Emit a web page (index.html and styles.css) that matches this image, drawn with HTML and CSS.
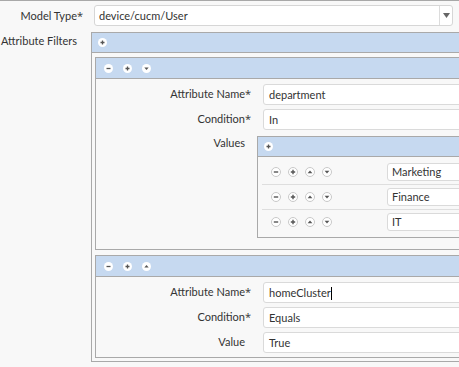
FILE: index.html
```html
<!DOCTYPE html>
<html lang="en">
<head>
    <meta charset="UTF-8">
    <meta name="viewport" content="width=device-width, initial-scale=1.0">
    <title>Data Filter</title>
    <link rel="stylesheet" href="styles.css">
</head>
<body>
    <div class="form">
        <div class="form-row">
            <label class="lbl">Model Type<span class="req">*</span></label>
            <div class="field">
                <div class="select">
                    <span class="select-value">device/cucm/User</span>
                    <span class="select-arrow">
                        <svg width="7" height="5" viewBox="0 0 7 5"><path d="M0 0h7l-3.5 5z" fill="#666"/></svg>
                    </span>
                </div>
            </div>
        </div>

        <div class="form-row">
            <label class="lbl lbl-top">Attribute Filters</label>
            <div class="field">
                <div class="panel outer">
                    <div class="panel-head">
                        <svg class="hbtn" viewBox="0 0 9 9"><circle cx="4.5" cy="4.5" r="4.5" fill="#fff"/><path d="M2.5 4.5h4M4.5 2.5v4" stroke="#555" stroke-width="1.3"/></svg>
                    </div>
                    <div class="outer-body">
                        <!-- filter 1 -->
                        <div class="panel item">
                            <div class="panel-head item-head">
                                <svg class="hbtn" viewBox="0 0 9 9"><circle cx="4.5" cy="4.5" r="4.5" fill="#fff"/><path d="M2.5 4.5h4" stroke="#555" stroke-width="1.3"/></svg>
                                <svg class="hbtn" viewBox="0 0 9 9"><circle cx="4.5" cy="4.5" r="4.5" fill="#fff"/><path d="M2.5 4.5h4M4.5 2.5v4" stroke="#555" stroke-width="1.3"/></svg>
                                <svg class="hbtn" viewBox="0 0 9 9"><circle cx="4.5" cy="4.5" r="4.5" fill="#fff"/><path d="M2.3 3.5h4.4l-2.2 2.6z" fill="#555"/></svg>
                            </div>
                            <div class="item-body">
                                <div class="item-row">
                                    <label class="ilbl">Attribute Name<span class="req">*</span></label>
                                    <div class="input">department</div>
                                </div>
                                <div class="item-row">
                                    <label class="ilbl">Condition<span class="req">*</span></label>
                                    <div class="input">In</div>
                                </div>
                                <div class="item-row values-row">
                                    <label class="ilbl ilbl-top">Values</label>
                                    <div class="panel values">
                                        <div class="panel-head values-head">
                                            <svg class="hbtn" viewBox="0 0 9 9"><circle cx="4.5" cy="4.5" r="4.5" fill="#fff"/><path d="M2.5 4.5h4M4.5 2.5v4" stroke="#555" stroke-width="1.3"/></svg>
                                        </div>
                                        <div class="values-body">
                                            <div class="value-row">
                                                <div class="value-btns">
                                                    <svg class="rbtn" viewBox="0 0 10 10"><circle cx="5" cy="5" r="4.5" fill="#fff" stroke="#c8c8c8"/><path d="M2.8 5h4.4" stroke="#555" stroke-width="1.4"/></svg>
                                                    <svg class="rbtn" viewBox="0 0 10 10"><circle cx="5" cy="5" r="4.5" fill="#fff" stroke="#c8c8c8"/><path d="M2.8 5h4.4M5 2.8v4.4" stroke="#555" stroke-width="1.4"/></svg>
                                                    <svg class="rbtn" viewBox="0 0 10 10"><circle cx="5" cy="5" r="4.5" fill="#fff" stroke="#c8c8c8"/><path d="M2.6 6.3h4.8l-2.4-2.9z" fill="#555"/></svg>
                                                    <svg class="rbtn" viewBox="0 0 10 10"><circle cx="5" cy="5" r="4.5" fill="#fff" stroke="#c8c8c8"/><path d="M2.6 3.7h4.8l-2.4 2.9z" fill="#555"/></svg>
                                                </div>
                                                <div class="input small">Marketing</div>
                                            </div>
                                            <div class="value-row">
                                                <div class="value-btns">
                                                    <svg class="rbtn" viewBox="0 0 10 10"><circle cx="5" cy="5" r="4.5" fill="#fff" stroke="#c8c8c8"/><path d="M2.8 5h4.4" stroke="#555" stroke-width="1.4"/></svg>
                                                    <svg class="rbtn" viewBox="0 0 10 10"><circle cx="5" cy="5" r="4.5" fill="#fff" stroke="#c8c8c8"/><path d="M2.8 5h4.4M5 2.8v4.4" stroke="#555" stroke-width="1.4"/></svg>
                                                    <svg class="rbtn" viewBox="0 0 10 10"><circle cx="5" cy="5" r="4.5" fill="#fff" stroke="#c8c8c8"/><path d="M2.6 6.3h4.8l-2.4-2.9z" fill="#555"/></svg>
                                                    <svg class="rbtn" viewBox="0 0 10 10"><circle cx="5" cy="5" r="4.5" fill="#fff" stroke="#c8c8c8"/><path d="M2.6 3.7h4.8l-2.4 2.9z" fill="#555"/></svg>
                                                </div>
                                                <div class="input small">Finance</div>
                                            </div>
                                            <div class="value-row">
                                                <div class="value-btns">
                                                    <svg class="rbtn" viewBox="0 0 10 10"><circle cx="5" cy="5" r="4.5" fill="#fff" stroke="#c8c8c8"/><path d="M2.8 5h4.4" stroke="#555" stroke-width="1.4"/></svg>
                                                    <svg class="rbtn" viewBox="0 0 10 10"><circle cx="5" cy="5" r="4.5" fill="#fff" stroke="#c8c8c8"/><path d="M2.8 5h4.4M5 2.8v4.4" stroke="#555" stroke-width="1.4"/></svg>
                                                    <svg class="rbtn" viewBox="0 0 10 10"><circle cx="5" cy="5" r="4.5" fill="#fff" stroke="#c8c8c8"/><path d="M2.6 6.3h4.8l-2.4-2.9z" fill="#555"/></svg>
                                                    <svg class="rbtn" viewBox="0 0 10 10"><circle cx="5" cy="5" r="4.5" fill="#fff" stroke="#c8c8c8"/><path d="M2.6 3.7h4.8l-2.4 2.9z" fill="#555"/></svg>
                                                </div>
                                                <div class="input small">IT</div>
                                            </div>
                                        </div>
                                    </div>
                                </div>
                            </div>
                        </div>

                        <!-- filter 2 -->
                        <div class="panel item">
                            <div class="panel-head item-head">
                                <svg class="hbtn" viewBox="0 0 9 9"><circle cx="4.5" cy="4.5" r="4.5" fill="#fff"/><path d="M2.5 4.5h4" stroke="#555" stroke-width="1.3"/></svg>
                                <svg class="hbtn" viewBox="0 0 9 9"><circle cx="4.5" cy="4.5" r="4.5" fill="#fff"/><path d="M2.5 4.5h4M4.5 2.5v4" stroke="#555" stroke-width="1.3"/></svg>
                                <svg class="hbtn" viewBox="0 0 9 9"><circle cx="4.5" cy="4.5" r="4.5" fill="#fff"/><path d="M2.3 5.5h4.4l-2.2-2.6z" fill="#555"/></svg>
                            </div>
                            <div class="item-body last">
                                <div class="item-row">
                                    <label class="ilbl">Attribute Name<span class="req">*</span></label>
                                    <div class="input">homeCluster<span class="caret"></span></div>
                                </div>
                                <div class="item-row">
                                    <label class="ilbl">Condition<span class="req">*</span></label>
                                    <div class="input">Equals</div>
                                </div>
                                <div class="item-row">
                                    <label class="ilbl">Value</label>
                                    <div class="input">True</div>
                                </div>
                            </div>
                        </div>
                    </div>
                </div>
            </div>
        </div>
    </div>
</body>
</html>
```

FILE: styles.css
```css
body {
    margin: 0;
    font-family: Lato, "Open Sans", Arial, sans-serif;
    font-size: 11px;
    color: #333;
    background-color: #f8f8f8;
    border-top: 1px solid #a8a8a8;
    overflow: hidden;
}

.form {
    padding-top: 4px;
}

.form-row {
    display: flex;
    align-items: flex-start;
    margin-bottom: 6px;
}

.lbl {
    width: 77px;
    flex-shrink: 0;
    text-align: right;
    line-height: 21px;
    white-space: nowrap;
}

.lbl-top {
    line-height: 15px;
    padding-top: 1px;
}

.req {
    display: inline-block;
    width: 7px;
    margin-right: -7px;
    text-align: left;
    font-family: "Open Sans", sans-serif;
}

.field {
    margin-left: 14px;
}

/* Model type select */
.select {
    display: flex;
    width: 359px;
    height: 21px;
    margin-left: 3px;
    box-sizing: border-box;
    background: #fff;
    border: 1px solid #d6d6d6;
    border-radius: 3px;
}

.select-value {
    flex: 1;
    padding-left: 4px;
    line-height: 19px;
}

.select-arrow {
    width: 12px;
    border-left: 1px solid #dcdcdc;
    display: flex;
    align-items: center;
    justify-content: center;
}

/* Panels */
.panel {
    border: 1px solid #a9a9a9;
    background-color: #f8f8f8;
}

.panel-head {
    display: flex;
    align-items: center;
    background-color: #c6d9f0;
    border-bottom: 1px solid #a9a9a9;
}

.outer {
    width: 420px;
}

.outer > .panel-head {
    height: 19px;
    padding-left: 6px;
}

.outer-body {
    padding: 4px 0 3px 3px;
}

.hbtn {
    width: 9px;
    height: 9px;
    display: block;
}

.item + .item {
    margin-top: 5px;
}

.item-head {
    height: 20px;
    padding-left: 8px;
    gap: 10px;
}

.item-body {
    padding: 5px 0 11px 0;
}

.item-body.last {
    padding-bottom: 4px;
}

.item-row {
    display: flex;
    align-items: flex-start;
    margin-bottom: 4px;
}

.item-row:last-child {
    margin-bottom: 0;
}

.values-row {
    padding-top: 2px;
}

.ilbl {
    width: 149px;
    flex-shrink: 0;
    text-align: right;
    line-height: 20px;
    white-space: nowrap;
}

.ilbl-top {
    line-height: 14px;
}

.input {
    height: 21px;
    width: 300px;
    flex-shrink: 0;
    margin-left: 18px;
    box-sizing: border-box;
    padding-left: 5px;
    line-height: 19px;
    background: #fff;
    border: 1px solid #dadada;
    border-radius: 3px;
    white-space: nowrap;
}

.caret {
    display: inline-block;
    width: 1px;
    height: 13px;
    background: #000;
    vertical-align: -3px;
}

/* Values list */
.values {
    margin-left: 12px;
    width: 300px;
    flex-shrink: 0;
}

.values-head {
    height: 19px;
    padding-left: 6px;
}

.values-body {
    padding: 3px 0 3px 4px;
}

.value-row {
    display: flex;
    align-items: center;
    padding: 3px 0;
    border-bottom: 1px solid #dedede;
}

.value-row:last-child {
    border-bottom: none;
}

.value-btns {
    width: 125px;
    flex-shrink: 0;
    padding-left: 9px;
    box-sizing: border-box;
    display: flex;
    gap: 7px;
}

.rbtn {
    width: 10px;
    height: 10px;
    display: block;
}

.input.small {
    height: 18px;
    line-height: 16px;
    margin-left: 0;
    padding-left: 4px;
}
```
